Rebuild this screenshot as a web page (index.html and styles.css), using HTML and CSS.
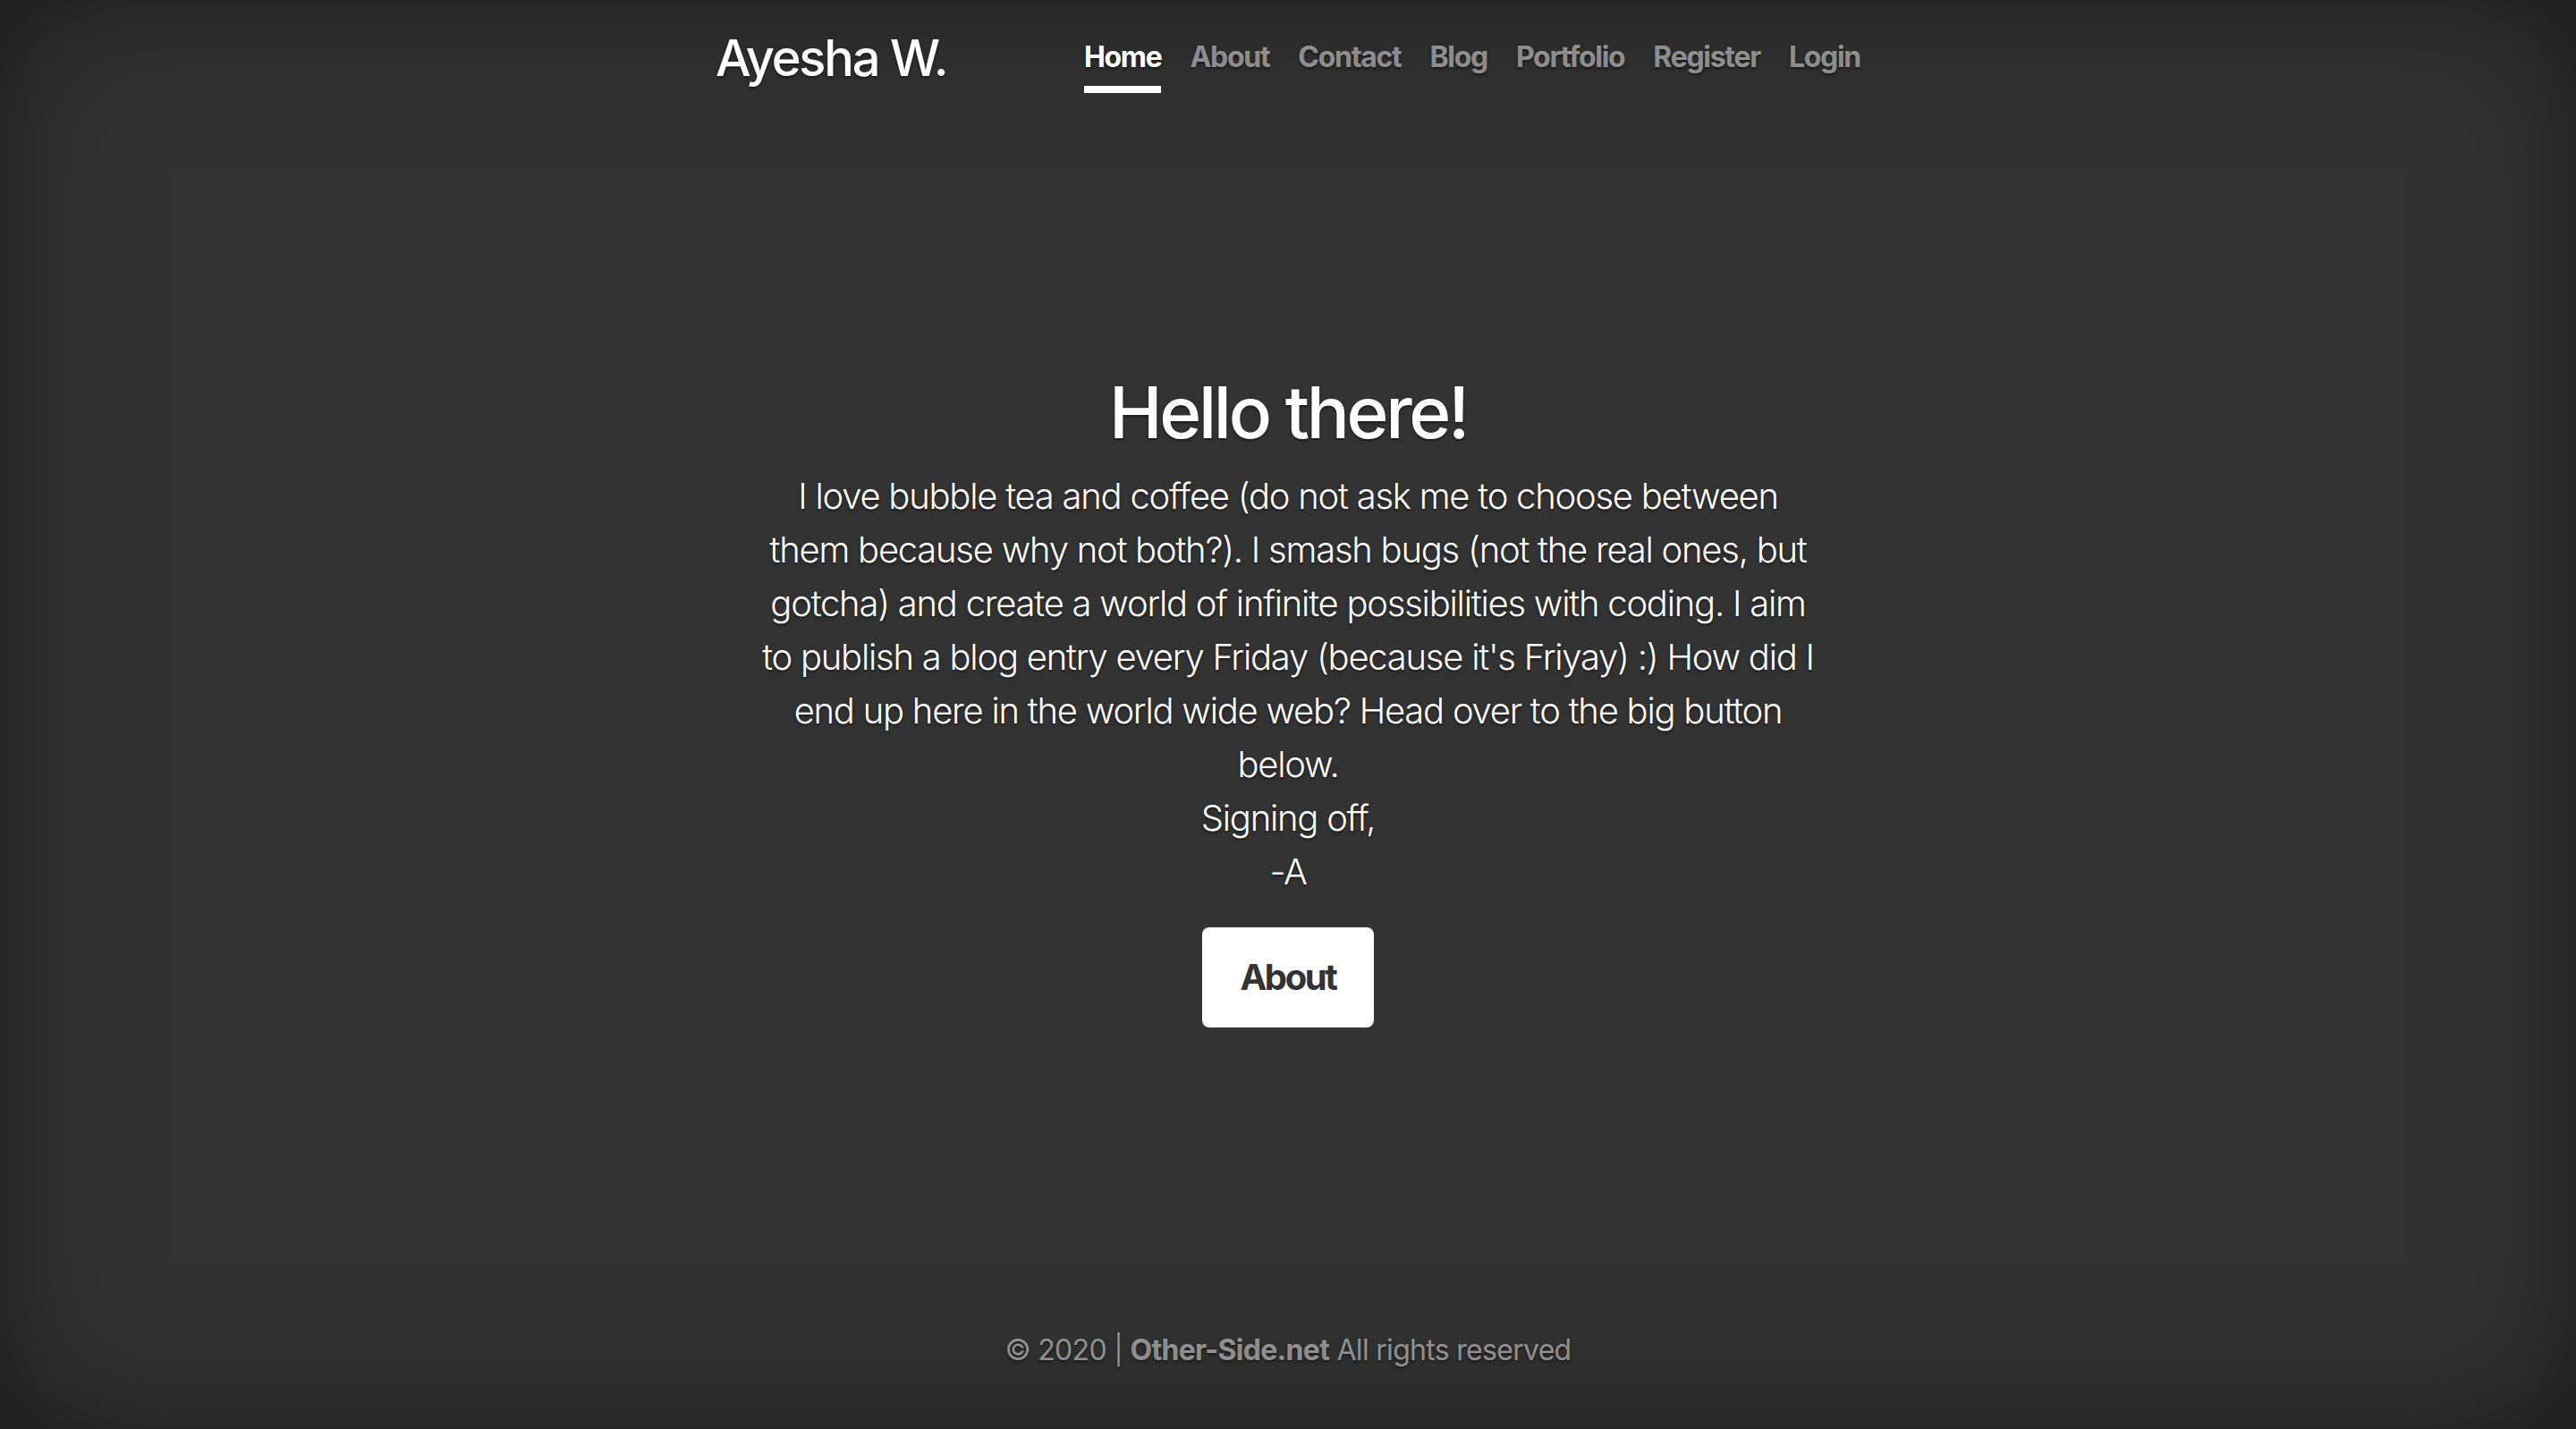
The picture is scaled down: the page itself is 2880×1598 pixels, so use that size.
FILE: index.html
```html
<!DOCTYPE html>
<html lang="en">
<head>
<meta charset="utf-8">
<title>Ayesha W.</title>
<link rel="stylesheet" href="styles.css">
</head>
<body>
<div class="cover">
  <header class="masthead">
    <h3 class="brand">Ayesha W.</h3>
    <nav class="nav">
      <a class="nav-link active" href="#">Home</a>
      <a class="nav-link" href="#">About</a>
      <a class="nav-link" href="#">Contact</a>
      <a class="nav-link" href="#">Blog</a>
      <a class="nav-link" href="#">Portfolio</a>
      <a class="nav-link" href="#">Register</a>
      <a class="nav-link" href="#">Login</a>
    </nav>
  </header>
  <main class="main">
    <h1 class="cover-heading">Hello there!</h1>
    <p class="lead">I love bubble tea and coffee (do not ask me to choose between<br>them because why not both?). I smash bugs (not the real ones, but<br>gotcha) and create a world of infinite possibilities with coding. I aim<br>to publish a blog entry every Friday (because it's Friyay) :) How did I<br>end up here in the world wide web? Head over to the big button<br>below.<br>Signing off,<br>-A</p>
    <p class="lead"><a href="#" class="btn">About</a></p>
  </main>
  <footer class="footer">
    <p>© 2020 | <a href="#" class="footer-link">Other-Side.net</a> All rights reserved</p>
  </footer>
</div>
</body>
</html>
```

FILE: styles.css
```css
html, body {
  height: 100%;
}
body {
  margin: 0;
  background-color: #333;
  color: #fff;
  font-family: Inter, "Liberation Sans", sans-serif;
  font-size: 32px;
  line-height: 1.5;
  text-shadow: 0 1.6px 3.2px rgba(0, 0, 0, .5);
  box-shadow: inset 0 0 160px rgba(0, 0, 0, .5);
  display: flex;
}
a {
  text-decoration: none;
}
.cover {
  box-sizing: border-box;
  width: 100%;
  max-width: 1344px;
  height: 100%;
  margin: 0 auto;
  padding: 32px;
  display: flex;
  flex-direction: column;
}
.masthead {
  margin-bottom: auto;
  display: flex;
  justify-content: space-between;
  align-items: flex-start;
}
.brand {
  margin: 0 0 16px;
  font-size: 56px;
  font-weight: 500;
  line-height: 1.2;
  letter-spacing: -2.2px;
}
.nav {
  display: flex;
}
.nav-link {
  padding: 8px 0;
  font-weight: 700;
  color: rgba(255, 255, 255, .5);
  border-bottom: 8px solid transparent;
  margin-left: 32px;
  letter-spacing: -1.3px;
}
.nav-link.active {
  color: #fff;
  border-bottom-color: #fff;
}
.main {
  text-align: center;
  padding-bottom: 8px;
}
.cover-heading {
  margin: 0 0 16px;
  font-size: 80px;
  font-weight: 500;
  line-height: 1.2;
  letter-spacing: -3.3px;
}
.lead {
  margin: 0 0 32px;
  font-size: 40px;
  font-weight: 300;
  line-height: 1.5;
  letter-spacing: -1.25px;
}
.btn {
  display: inline-block;
  padding: 24px 40px;
  font-size: 40px;
  line-height: 1.5;
  font-weight: 700;
  color: #333;
  background-color: #fff;
  border: 2px solid #fff;
  border-radius: 8px;
  text-shadow: none;
  letter-spacing: -2.4px;
  vertical-align: middle;
}
.footer {
  margin-top: auto;
  text-align: center;
  color: rgba(255, 255, 255, .5);
  letter-spacing: -0.7px;
}
.footer p {
  margin: 0 0 32px;
}
.footer-link {
  color: rgba(255, 255, 255, .5);
  font-weight: 700;
}
```
